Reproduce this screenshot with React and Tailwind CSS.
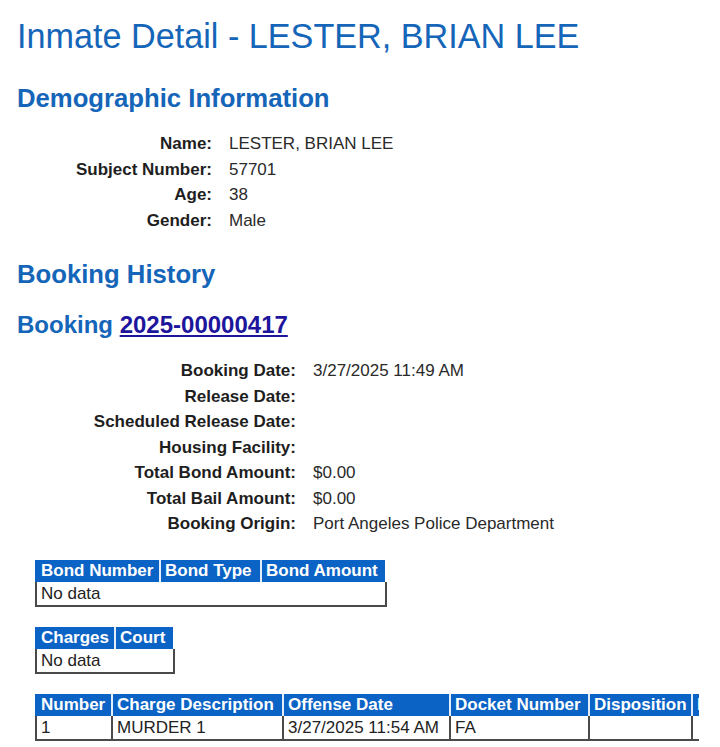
import React from 'react';

const demographic = [
    ['Name:', 'LESTER, BRIAN LEE'],
    ['Subject Number:', '57701'],
    ['Age:', '38'],
    ['Gender:', 'Male'],
];

const booking = [
    ['Booking Date:', '3/27/2025 11:49 AM'],
    ['Release Date:', ''],
    ['Scheduled Release Date:', ''],
    ['Housing Facility:', ''],
    ['Total Bond Amount:', '$0.00'],
    ['Total Bail Amount:', '$0.00'],
    ['Booking Origin:', 'Port Angeles Police Department'],
];

function DetailRows({ rows, labelWidth }) {
    return (
        <div className="grid gap-x-[17px]" style={{ gridTemplateColumns: `${labelWidth}px auto` }}>
            {rows.map(([label, value]) => (
                <React.Fragment key={label}>
                    <div className="h-[25.5px] leading-[25.5px] text-right font-bold text-[#1e1e1e]">{label}</div>
                    <div className="h-[25.5px] leading-[25.5px] text-[#2a2a2a]">{value}</div>
                </React.Fragment>
            ))}
        </div>
    );
}

function DataTable({ columns, rows }) {
    const total = columns.reduce((s, c) => s + c[1], 0);
    return (
        <table className="ml-[35px] border-separate border-spacing-0 table-fixed" style={{ width: total }}>
            <thead>
                <tr>
                    {columns.map(([name, width], i) => (
                        <th
                            key={name}
                            style={{ width }}
                            className={`h-[22px] p-0 pl-[4px] text-left text-[17px] leading-[22px] font-bold text-white bg-[#0b63c5] whitespace-nowrap overflow-hidden ${i === 0 ? 'border-l-2 border-[#0b63c5]' : 'border-l-2 border-[#e4eefa]'} ${i === columns.length - 1 ? 'border-r-2 border-r-white' : ''}`}
                        >
                            {name}
                        </th>
                    ))}
                </tr>
            </thead>
            <tbody>
                {rows.map((row, r) => (
                    <tr key={r}>
                        {row.map((cell, i) => (
                            <td
                                key={i}
                                colSpan={row.length === 1 ? columns.length : 1}
                                className={`h-[25px] p-0 pl-[4px] text-left text-[17px] leading-[23px] text-[#222] whitespace-nowrap overflow-hidden border-l-2 border-b-2 border-[#4a4a4a] ${i === row.length - 1 ? 'border-r-2' : ''}`}
                            >
                                {cell}
                            </td>
                        ))}
                    </tr>
                ))}
            </tbody>
        </table>
    );
}

export default function App() {
    return (
        <div className="w-[720px] h-[747px] overflow-hidden bg-white font-['Liberation_Sans',Arial,sans-serif] text-[17px]">
            <div className="pl-[17px] pt-[16px]">
                <h1 className="text-[34.2px] leading-[40px] text-[#1565b8] whitespace-nowrap">Inmate Detail - LESTER, BRIAN LEE</h1>

                <h2 className="mt-[27px] text-[25.7px] leading-[30px] font-bold text-[#1565b8]">Demographic Information</h2>
                <div className="mt-[18px]">
                    <DetailRows rows={demographic} labelWidth={195} />
                </div>

                <h2 className="mt-[26px] text-[25.7px] leading-[30px] font-bold text-[#1565b8]">Booking History</h2>
                <h3 className="mt-[22px] text-[24px] leading-[28px] font-bold text-[#1565b8]">
                    Booking <a href="#" className="text-[#1d169c] underline">2025-00000417</a>
                </h3>
                <div className="mt-[19px]">
                    <DetailRows rows={booking} labelWidth={279} />
                </div>
            </div>

            <div className="mt-[23px]">
                <DataTable
                    columns={[['Bond Number', 124], ['Bond Type', 101], ['Bond Amount', 127]]}
                    rows={[['No data']]}
                />
            </div>
            <div className="mt-[20px]">
                <DataTable
                    columns={[['Charges', 79], ['Court', 61]]}
                    rows={[['No data']]}
                />
            </div>
            <div className="mt-[20px] w-[699px] overflow-hidden">
                <DataTable
                    columns={[
                        ['Number', 76],
                        ['Charge Description', 171],
                        ['Offense Date', 167],
                        ['Docket Number', 139],
                        ['Disposition', 103],
                        ['Disposition Date', 160],
                    ]}
                    rows={[['1', 'MURDER 1', '3/27/2025 11:54 AM', 'FA', '', '']]}
                />
            </div>
        </div>
    );
}
